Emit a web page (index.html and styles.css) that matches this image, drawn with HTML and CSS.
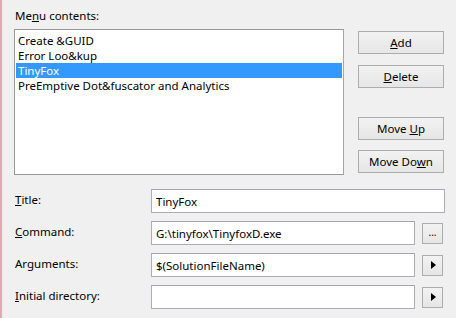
FILE: index.html
```html
<!DOCTYPE html>
<html lang="en">
  <head>
    <meta charset="utf-8" />
    <title>External Tools</title>
    <link rel="stylesheet" href="styles.css">
  </head>
  <body>
    <div class="dialog">
      <div class="caption">Me<u>n</u>u contents:</div>
      <div class="top">
        <ul class="listbox">
          <li>Create &amp;GUID</li>
          <li>Error Loo&amp;kup</li>
          <li class="selected">TinyFox</li>
          <li>PreEmptive Dot&amp;fuscator and Analytics</li>
        </ul>
        <div class="side-buttons">
          <button class="btn" type="button"><u>A</u>dd</button>
          <button class="btn" type="button"><u>D</u>elete</button>
          <button class="btn move-up" type="button">Move <u>U</u>p</button>
          <button class="btn last" type="button">Move Do<u>w</u>n</button>
        </div>
      </div>

      <div class="fields">
        <label class="field-label"><u>T</u>itle:</label>
        <div class="field-row">
          <input class="text-input" value="TinyFox" />
        </div>

        <label class="field-label"><u>C</u>ommand:</label>
        <div class="field-row">
          <input class="text-input" value="G:\tinyfox\TinyfoxD.exe" />
          <button class="small-btn dots" type="button">...</button>
        </div>

        <label class="field-label">Ar<u>g</u>uments:</label>
        <div class="field-row">
          <input class="text-input" value="$(SolutionFileName)" />
          <button class="small-btn" type="button"><span class="arrow"></span></button>
        </div>

        <label class="field-label"><u>I</u>nitial directory:</label>
        <div class="field-row">
          <input class="text-input" value="" />
          <button class="small-btn" type="button"><span class="arrow"></span></button>
        </div>
      </div>
    </div>
  </body>
</html>
```

FILE: styles.css
```css
html, body {
  margin: 0;
  padding: 0;
  height: 100%;
}

body {
  background-color: #f0f0f0;
  font-family: "Noto Sans", "Open Sans", sans-serif;
  font-size: 11.5px;
  color: #000;
  overflow: hidden;
}

.dialog {
  height: 100%;
  box-sizing: border-box;
  border-left: 2px solid #e4a7b2;
  padding: 8px 12px 0 12px;
}

.caption {
  line-height: 15px;
  margin-left: 1px;
}

.top {
  display: flex;
  align-items: flex-start;
  margin-top: 6px;
}

.listbox {
  list-style: none;
  margin: 0;
  padding: 3px 1px;
  width: 330px;
  height: 146px;
  box-sizing: border-box;
  background: #fff;
  border: 1px solid #999;
  border-right-color: #a7a7a7;
}

.listbox li {
  height: 15px;
  line-height: 15px;
  padding-left: 2px;
  white-space: nowrap;
}

.listbox li.selected {
  background: #3399ff;
  color: #fff;
}

.side-buttons {
  display: flex;
  flex-direction: column;
  margin-left: 14px;
  padding-top: 2px;
}

.btn {
  width: 86px;
  height: 23px;
  margin: 0 0 11px 0;
  padding: 0;
  font: inherit;
  color: #000;
  border: 1px solid #adadad;
  background: linear-gradient(#f2f2f2, #e6e6e6);
}

.btn.move-up {
  margin-top: 18px;
  margin-bottom: 10px;
}

.btn.last {
  margin-bottom: 0;
}

.fields {
  display: grid;
  grid-template-columns: 137px 1fr;
  row-gap: 8px;
  margin-top: 14px;
}

.field-label {
  padding-top: 3px;
  padding-left: 1px;
  line-height: 15px;
}

.field-row {
  display: flex;
  align-items: center;
  gap: 7px;
  width: 294px;
}

.text-input {
  flex: 1;
  min-width: 0;
  height: 24px;
  box-sizing: border-box;
  margin: 0;
  padding: 0 4px;
  font: inherit;
  color: #000;
  background: #fff;
  border: 1px solid #abadb3;
  border-top-color: #a6a8ad;
  outline: none;
}

.small-btn {
  width: 21px;
  height: 21px;
  margin-right: 2px;
  padding: 0;
  font: inherit;
  font-size: 10px;
  color: #000;
  border: 1px solid #adadad;
  background: linear-gradient(#f2f2f2, #e6e6e6);
  display: flex;
  align-items: center;
  justify-content: center;
}

.small-btn.dots {
  padding-bottom: 3px;
}

.arrow {
  width: 0;
  height: 0;
  border-top: 4px solid transparent;
  border-bottom: 4px solid transparent;
  border-left: 5px solid #000;
  margin-left: 2px;
}
```
